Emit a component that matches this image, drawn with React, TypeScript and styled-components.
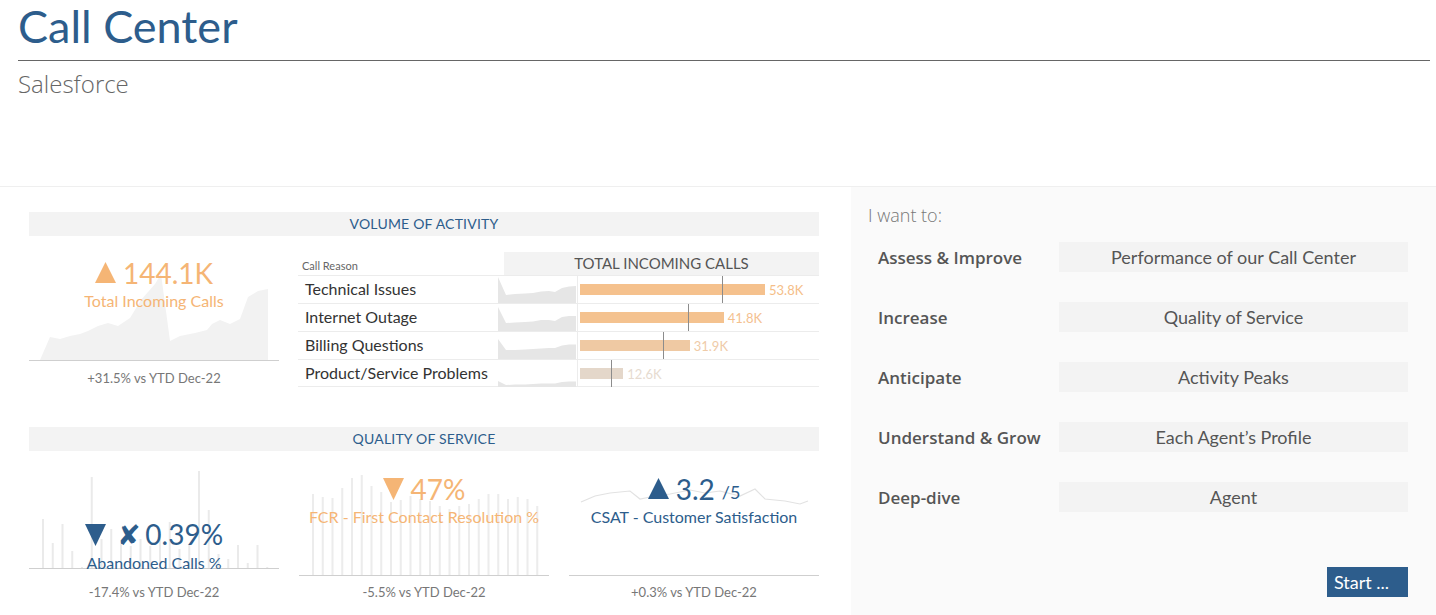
import React from "react";
import styled, { createGlobalStyle } from "styled-components";

const BLUE = "#2d5d8c";
const ORANGE = "#f5b575";

const Global = createGlobalStyle`
  html, body { margin: 0; padding: 0; background: #fff; }
  body { font-family: Lato, "Open Sans", sans-serif; }
  * { box-sizing: border-box; }
`;

const Page = styled.div`
  width: 1436px;
  height: 615px;
  overflow: hidden;
  display: flex;
  flex-direction: column;
`;

const Header = styled.header`
  height: 186px;
  padding: 0 6px 0 18px;
`;

const Title = styled.h1`
  margin: 0;
  font-size: 45px;
  line-height: 52px;
  font-weight: 400;
  color: ${BLUE};
`;

const Rule = styled.hr`
  margin: 8px 0 0;
  border: 0;
  border-top: 1px solid #666;
`;

const Subtitle = styled.div`
  margin-top: 8px;
  font-family: "Open Sans", sans-serif;
  font-size: 24px;
  line-height: 30px;
  font-weight: 300;
  color: #666;
`;

const Body = styled.main`
  flex: 1;
  display: flex;
  border-top: 1px solid #efefef;
`;

const LeftPanel = styled.section`
  width: 851px;
  padding: 25px 32px 0 29px;
`;

const SectionHeader = styled.div`
  height: 24px;
  line-height: 24px;
  background: #f3f3f3;
  text-align: center;
  font-size: 14px;
  color: ${BLUE};
  letter-spacing: 0.2px;
`;

const VolumeRow = styled.div`
  height: 191px;
  display: flex;
  gap: 19px;
`;

const Card = styled.div`
  width: 250px;
  display: flex;
  flex-direction: column;
`;

const ChartArea = styled.div<{ $h: number; $pt: number }>`
  position: relative;
  height: ${(p) => p.$h}px;
  padding-top: ${(p) => p.$pt}px;
  border-bottom: 1px solid #cfcfcf;
`;

const ChartBg = styled.svg`
  position: absolute;
  left: 0;
  bottom: 0;
  z-index: 0;
`;

const KpiText = styled.div<{ $color: string }>`
  position: relative;
  z-index: 1;
  text-align: center;
  color: ${(p) => p.$color};
`;

const KpiValue = styled.div<{ $gap?: number }>`
  display: flex;
  align-items: center;
  justify-content: center;
  gap: ${(p) => p.$gap ?? 7}px;
  font-size: 28px;
  line-height: 32px;
  height: 32px;
`;

const Cross = styled.span`
  font-family: "DejaVu Sans", sans-serif;
  font-size: 28px;
  line-height: 32px;
  font-weight: 700;
  margin-right: 5px;
`;

const Denom = styled.span`
  font-size: 18px;
  align-self: flex-end;
  line-height: 26px;
`;

const KpiLabel = styled.div`
  margin-top: 2px;
  font-size: 16px;
  line-height: 20px;
`;

const Footnote = styled.div<{ $mt: number }>`
  margin-top: ${(p) => p.$mt}px;
  text-align: center;
  font-size: 13px;
  line-height: 18px;
  color: #777;
`;

const Table = styled.div`
  width: 521px;
  margin-top: 16px;
`;

const TableHead = styled.div`
  display: grid;
  grid-template-columns: 206px 1fr;
  height: 23px;
`;

const ColLabel = styled.div`
  font-size: 11px;
  color: #666;
  padding: 7px 0 0 4px;
`;

const ColBand = styled.div`
  background: #f3f3f3;
  text-align: center;
  font-size: 15px;
  line-height: 23px;
  color: #555;
`;

const Row = styled.div<{ $last?: boolean }>`
  display: grid;
  grid-template-columns: 200px 79px 1fr;
  height: 28px;
  border-top: 1px solid #ececec;
  ${(p) => (p.$last ? "border-bottom: 1px solid #ececec;" : "")}
`;

const RowName = styled.div`
  padding-left: 7px;
  font-size: 16px;
  line-height: 26px;
  color: #333;
`;

const SparkCell = styled.div`
  display: flex;
  align-items: flex-end;
`;

const BarCell = styled.div`
  position: relative;
  border-left: 1px solid #ececec;
  padding-left: 2px;
  display: flex;
  align-items: center;
  gap: 4px;
`;

const Bar = styled.div<{ $color: string }>`
  height: 11px;
  background: ${(p) => p.$color};
`;

const BarValue = styled.span<{ $color: string }>`
  font-size: 13px;
  color: ${(p) => p.$color};
`;

const RefLine = styled.div`
  position: absolute;
  top: 0;
  bottom: 0;
  width: 1px;
  background: #8c8c8c;
`;

const QualityRow = styled.div`
  display: flex;
  gap: 20px;
`;

const RightPanel = styled.aside`
  flex: 1;
  background: #fafafa;
  padding: 17px 28px 0 17px;
  display: flex;
  flex-direction: column;
`;

const Prompt = styled.div`
  font-family: "Open Sans", sans-serif;
  font-size: 18px;
  line-height: 22px;
  font-weight: 300;
  color: #777;
`;

const Options = styled.div`
  margin-top: 16px;
  padding-left: 10px;
  display: grid;
  row-gap: 30px;
`;

const Option = styled.div`
  display: grid;
  grid-template-columns: 181px 349px;
  height: 30px;
  align-items: center;
`;

const OptLabel = styled.div`
  font-family: "Open Sans", sans-serif;
  font-size: 17px;
  font-weight: 600;
  color: #555;
`;

const OptBox = styled.div`
  height: 30px;
  line-height: 30px;
  background: #f3f3f3;
  text-align: center;
  font-size: 18px;
  color: #555;
`;

const StartButton = styled.button`
  align-self: flex-end;
  margin-top: 55px;
  width: 81px;
  height: 30px;
  border: 0;
  background: ${BLUE};
  color: #fff;
  font-family: Lato, sans-serif;
  font-size: 18px;
  text-align: left;
  padding: 0 0 0 7px;
`;

const Tri = ({ dir, color }: { dir: "up" | "down"; color: string }) => (
  <svg width="21" height="22" viewBox="0 0 21 22">
    {dir === "up" ? (
      <polygon points="10.5,0 21,21 0,21" fill={color} />
    ) : (
      <polygon points="0,0 21,0 10.5,22" fill={color} />
    )}
  </svg>
);

const incomingPts: [number, number][] = [
  [40, 361], [50, 338], [60, 340], [70, 337], [80, 335], [88, 332], [98, 327], [108, 324],
  [118, 327], [130, 319], [141, 301], [155, 285], [161, 275], [170, 342], [180, 337],
  [195, 334], [207, 331], [212, 325], [220, 321], [230, 325], [240, 320], [248, 298],
  [258, 292], [268, 290], [268, 361],
];

const AreaChart = () => (
  <ChartBg width="250" height="125" viewBox="0 0 250 125">
    <polygon
      fill="#f2f2f2"
      points={incomingPts.map(([x, y]) => `${x - 29},${y - 236}`).join(" ")}
    />
  </ChartBg>
);

const abandonedTops = [520, 544, 525, 552, 568, 478, 540, 530, 545, 547, 540, 547, 535, 523, 550, 545, 472, 511, 555, 560, 546, 564, 546, 568];
const BarsAbandoned = () => (
  <ChartBg width="250" height="118" viewBox="0 0 250 118">
    {abandonedTops.map((t, i) => {
      const x = 42 + i * 9.75 - 29;
      return <rect key={i} x={x} y={t - 451} width="2" height={569 - t} fill="#eaeaea" />;
    })}
  </ChartBg>
);

const fcrTops = [495, 498, 499, 489, 479, 476, 487, 493, 503, 501, 497, 500, 502, 507, 510, 507, 505, 500, 495, 495, 500, 498, 500, 507];
const BarsFcr = () => (
  <ChartBg width="250" height="125" viewBox="0 0 250 125">
    {fcrTops.map((t, i) => {
      const x = 312 + i * 9.75 - 299;
      return <rect key={i} x={x} y={t - 451} width="2" height={576 - t} fill="#ececec" />;
    })}
  </ChartBg>
);

const csatPts: [number, number][] = [
  [581, 503], [595, 497], [610, 494], [630, 492], [640, 500], [655, 497], [670, 495],
  [690, 491], [705, 494], [720, 492], [740, 497], [755, 490], [765, 500], [785, 502],
  [800, 505], [808, 502],
];
const LineCsat = () => (
  <ChartBg width="250" height="125" viewBox="0 0 250 125">
    <polyline
      fill="none"
      stroke="#e2e2e2"
      strokeWidth="1.2"
      points={csatPts.map(([x, y]) => `${x - 569},${y - 451}`).join(" ")}
    />
  </ChartBg>
);

const Spark = ({ ys }: { ys: number[] }) => {
  const xs = [0, 8, 17, 27, 35, 43, 51, 57, 64, 71, 78];
  const pts = xs.map((x, i) => `${x},${ys[i]}`).join(" ");
  return (
    <svg width="78" height="27" viewBox="0 0 78 27">
      <polygon fill="#e6e6e6" points={`0,27 ${pts} 78,27`} />
    </svg>
  );
};

type Reason = { name: string; value: number; color: string; label: string; ref: number; spark: number[] };
const reasons: Reason[] = [
  { name: "Technical Issues", value: 53.8, color: "#f5c18d", label: "#f5be88", ref: 142, spark: [1, 19, 18, 17.5, 17, 15.5, 15, 16, 12, 10.5, 10] },
  { name: "Internet Outage", value: 41.8, color: "#f4c28f", label: "#f4c190", ref: 108, spark: [3, 19, 18.5, 18, 17.5, 16, 16, 17, 13, 12, 12] },
  { name: "Billing Questions", value: 31.9, color: "#efc9a3", label: "#efcba8", ref: 83, spark: [7, 18, 18, 17.5, 17, 16.5, 16, 16, 13.5, 12.5, 12.5] },
  { name: "Product/Service Problems", value: 12.6, color: "#e4d7ca", label: "#e6dbd0", ref: 31, spark: [21, 25, 24.5, 24.5, 24, 23.5, 23.5, 23.5, 22, 21.5, 21.5] },
];

const options = [
  ["Assess & Improve", "Performance of our Call Center"],
  ["Increase", "Quality of Service"],
  ["Anticipate", "Activity Peaks"],
  ["Understand & Grow", "Each Agent’s Profile"],
  ["Deep-dive", "Agent"],
];

export default function App() {
  return (
    <Page>
      <Global />
      <Header>
        <Title>Call Center</Title>
        <Rule />
        <Subtitle>Salesforce</Subtitle>
      </Header>
      <Body>
        <LeftPanel>
          <SectionHeader>VOLUME OF ACTIVITY</SectionHeader>
          <VolumeRow>
            <Card>
              <ChartArea $h={125} $pt={21}>
                <AreaChart />
                <KpiText $color={ORANGE}>
                  <KpiValue>
                    <Tri dir="up" color={ORANGE} />
                    <span>144.1K</span>
                  </KpiValue>
                  <KpiLabel>Total Incoming Calls</KpiLabel>
                </KpiText>
              </ChartArea>
              <Footnote $mt={8}>+31.5% vs YTD Dec-22</Footnote>
            </Card>
            <Table>
              <TableHead>
                <ColLabel>Call Reason</ColLabel>
                <ColBand>TOTAL INCOMING CALLS</ColBand>
              </TableHead>
              {reasons.map((r, i) => (
                <Row key={r.name} $last={i === reasons.length - 1}>
                  <RowName>{r.name}</RowName>
                  <SparkCell>
                    <Spark ys={r.spark} />
                  </SparkCell>
                  <BarCell>
                    <Bar $color={r.color} style={{ width: `${(r.value / 53.8) * 185}px` }} />
                    <BarValue $color={r.label}>{r.value.toFixed(1)}K</BarValue>
                    <RefLine style={{ left: `${r.ref + 2}px` }} />
                  </BarCell>
                </Row>
              ))}
            </Table>
          </VolumeRow>
          <SectionHeader>QUALITY OF SERVICE</SectionHeader>
          <QualityRow>
            <Card>
              <ChartArea $h={118} $pt={68}>
                <BarsAbandoned />
                <KpiText $color={BLUE}>
                  <KpiValue $gap={11}>
                    <Tri dir="down" color={BLUE} />
                    <span>
                      <Cross>✘</Cross>0.39%
                    </span>
                  </KpiValue>
                  <KpiLabel>Abandoned Calls %</KpiLabel>
                </KpiText>
              </ChartArea>
              <Footnote $mt={14}>-17.4% vs YTD Dec-22</Footnote>
            </Card>
            <Card>
              <ChartArea $h={125} $pt={22}>
                <BarsFcr />
                <KpiText $color={ORANGE}>
                  <KpiValue>
                    <Tri dir="down" color={ORANGE} />
                    <span>47%</span>
                  </KpiValue>
                  <KpiLabel>FCR - First Contact Resolution %</KpiLabel>
                </KpiText>
              </ChartArea>
              <Footnote $mt={7}>-5.5% vs YTD Dec-22</Footnote>
            </Card>
            <Card>
              <ChartArea $h={125} $pt={22}>
                <LineCsat />
                <KpiText $color={BLUE}>
                  <KpiValue>
                    <Tri dir="up" color={BLUE} />
                    <span>3.2</span>
                    <Denom>/5</Denom>
                  </KpiValue>
                  <KpiLabel>CSAT - Customer Satisfaction</KpiLabel>
                </KpiText>
              </ChartArea>
              <Footnote $mt={7}>+0.3% vs YTD Dec-22</Footnote>
            </Card>
          </QualityRow>
        </LeftPanel>
        <RightPanel>
          <Prompt>I want to:</Prompt>
          <Options>
            {options.map(([a, b]) => (
              <Option key={a}>
                <OptLabel>{a}</OptLabel>
                <OptBox>{b}</OptBox>
              </Option>
            ))}
          </Options>
          <StartButton>Start ...</StartButton>
        </RightPanel>
      </Body>
    </Page>
  );
}
